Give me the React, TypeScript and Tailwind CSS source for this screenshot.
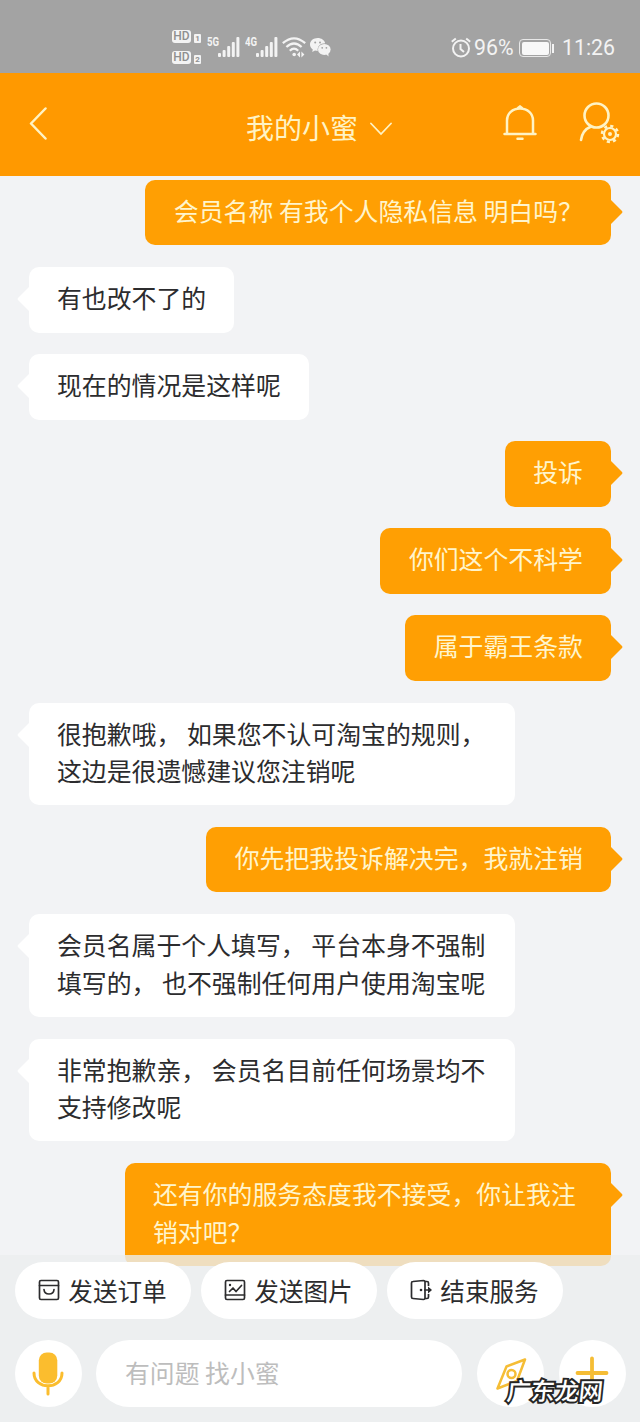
import type { ReactNode } from "react";

type Message = { from: "me" | "bot"; lines: string[] };

const messages: Message[] = [
  { from: "me", lines: ["会员名称 有我个人隐私信息 明白吗？"] },
  { from: "bot", lines: ["有也改不了的"] },
  { from: "bot", lines: ["现在的情况是这样呢"] },
  { from: "me", lines: ["投诉"] },
  { from: "me", lines: ["你们这个不科学"] },
  { from: "me", lines: ["属于霸王条款"] },
  { from: "bot", lines: ["很抱歉哦， 如果您不认可淘宝的规则，", "这边是很遗憾建议您注销呢"] },
  { from: "me", lines: ["你先把我投诉解决完，我就注销"] },
  { from: "bot", lines: ["会员名属于个人填写， 平台本身不强制", "填写的， 也不强制任何用户使用淘宝呢"] },
  { from: "bot", lines: ["非常抱歉亲， 会员名目前任何场景均不", "支持修改呢"] },
  { from: "me", lines: ["还有你的服务态度我不接受，你让我注", "销对吧？"] },
];

function Signal({ label }: { label: string }) {
  return (
    <div className="flex h-[22px] items-start">
      <span className="w-[11px] origin-left scale-x-80 font-['Roboto'] text-[12px] leading-[10px] font-bold">{label}</span>
      <svg width="22" height="20" viewBox="0 0 22 20" fill="currentColor">
        <rect x="0" y="16" width="3" height="4" rx="1" />
        <rect x="4.6" y="13" width="3" height="7" rx="1" />
        <rect x="9.2" y="9" width="3" height="11" rx="1" />
        <rect x="13.8" y="5" width="3" height="15" rx="1" />
        <rect x="18.4" y="0" width="3" height="20" rx="1" />
      </svg>
    </div>
  );
}

function HdBadge({ sim }: { sim: string }) {
  return (
    <div className="flex items-end gap-[3px]">
      <span className="h-[13px] w-[19px] rounded-[3px] bg-[#f3f3f3] text-center font-['Roboto'] text-[12px] leading-[13px] font-medium text-[#8f8f8f]">HD</span>
      <span className="h-[9px] w-[7px] rounded-[1px] bg-[#f3f3f3] text-center font-['Roboto'] text-[8px] leading-[9px] font-bold text-[#8f8f8f]">{sim}</span>
    </div>
  );
}

function StatusBar() {
  return (
    <div className="flex h-[73px] shrink-0 items-start bg-[#a3a3a3] pt-[30px] text-[#f3f3f3]">
      <div className="ml-[172px] flex w-[35px] flex-col gap-[8px]">
        <HdBadge sim="1" />
        <HdBadge sim="2" />
      </div>
      <div className="mt-[7px] flex">
        <Signal label="5G" />
        <div className="w-[5px]" />
        <Signal label="4G" />
      </div>
      <svg width="24" height="22" viewBox="0 0 24 22" className="mt-[7px] ml-[4px]" fill="none" stroke="currentColor" strokeWidth="2.200">
        <path d="M.8 6.200Q12-3.600 23.200 6.200M4.400 10Q12 3 19.600 10M7.800 13.800Q12 9.600 16.200 13.800" />
        <circle cx="12.200" cy="17.500" r="1.800" fill="currentColor" stroke="none" />
        <path d="M18 14.500v6l-3-3zM19.400 14.500v6l3-3z" fill="currentColor" stroke="none" />
      </svg>
      <svg width="21" height="19" viewBox="0 0 21 19" className="mt-[8px] ml-[4px]" fill="currentColor">
        <path d="M7.700 0C3.400 0 0 2.800 0 6.400c0 2 1.100 3.800 2.800 5L2.200 14l2.800-1.500c.9.3 1.800.4 2.700.4C7 8.500 10.200 5.200 15.100 5.200 14.500 2.200 11.400 0 7.700 0z" />
        <ellipse cx="14.300" cy="11.400" rx="6.300" ry="5.500" />
        <path d="m15.500 15.500 3 3-.2-3.500z" />
        <g fill="#a3a3a3">
          <circle cx="5.200" cy="4.400" r="1" />
          <circle cx="10" cy="4.400" r="1" />
          <circle cx="12.200" cy="9.800" r=".9" />
          <circle cx="16.400" cy="9.800" r=".9" />
        </g>
      </svg>
      <div className="mt-[6px] ml-[120px] flex h-6 items-center">
        <svg width="20" height="21" viewBox="0 0 20 21" className="-mt-[2px]" fill="none" stroke="currentColor" strokeWidth="2">
          <circle cx="10" cy="11.500" r="8" />
          <path d="M9.500 7v5l3.500 3M.8 4.800 4.800 1.400M15.200 1.400l4 3.400" />
        </svg>
        <span className="ml-[3px] w-[41px] font-['Roboto'] text-[21.300px] leading-6">96%</span>
        <div className="ml-[4px] h-[18px] w-[32px] rounded-[4px] border border-[#e8e8e8] p-[1.500px]">
          <div className="h-full rounded-[2px] bg-[#f8f8f8]" />
        </div>
        <div className="ml-px h-[9px] w-[2px] bg-[#f3f3f3]" />
        <span className="ml-[8px] font-['Roboto'] text-[21.300px] leading-6">11:26</span>
      </div>
    </div>
  );
}

function Header() {
  return (
    <div className="flex h-[103px] shrink-0 items-center bg-[#ff9900] text-[#fff3c4]">
      <svg width="20" height="34" viewBox="0 0 20 34" className="-mt-[4px] ml-[29px]" fill="none" stroke="currentColor" strokeWidth="2.500" strokeLinecap="round" strokeLinejoin="round">
        <path d="M16.500 2.500 2 17.500l14.500 15" />
      </svg>
      <h1 className="mt-[4px] ml-[197px] text-[28px] leading-[40px]">我的小蜜</h1>
      <svg width="22" height="14" viewBox="0 0 22 14" className="mt-[8px] ml-[12px]" fill="none" stroke="currentColor" strokeWidth="1.800" strokeLinecap="round">
        <path d="m1 1.500 10 10.500L21 1.500" />
      </svg>
      <svg width="34" height="36" viewBox="0 0 34 36" className="-mt-[4px] ml-[111px]" fill="none" stroke="currentColor" strokeWidth="2.500" strokeLinecap="round">
        <path d="M4 28.500V15.500C4 8.500 9.500 3.500 17 3.500s13 5 13 12v13M1.500 29h31M14.500 33.700h5M15 3l2-1.500L19 3" />
      </svg>
      <svg width="42" height="44" viewBox="0 0 42 44" className="-mt-[3px] ml-[42px]" fill="none" stroke="currentColor" strokeWidth="2.600" strokeLinecap="round">
        <circle cx="17.500" cy="14.500" r="12" />
        <path d="M2 39c1-7 4-11 10-13.500" />
        <circle cx="31" cy="33" r="6" strokeWidth="2.200" />
        <circle cx="31" cy="33" r="8" strokeWidth="2.500" strokeLinecap="butt" strokeDasharray="3.140 3.140" />
        <circle cx="31" cy="33" r="2" fill="currentColor" stroke="none" />
      </svg>
    </div>
  );
}

function Bubble({ message }: { message: Message }) {
  const mine = message.from === "me";
  const width = message.lines.length > 1 ? "w-[486.500px]" : "";
  return (
    <div className={mine ? "flex justify-end pr-[17px]" : "flex pl-[17px]"}>
      {!mine && (
        <svg width="12" height="24" viewBox="0 0 12 24" className="mt-[20px] shrink-0 text-white" fill="currentColor">
          <path d="M12 0v24L1 13q-1-1 0-2z" />
        </svg>
      )}
      <div
        className={
          mine
            ? `${width} rounded-[10px] bg-[#ff9f03] pt-[12px] pr-[28px] pb-[16px] pl-[28.500px] text-[#fff5cc]`
            : `${width} -ml-[0.500px] rounded-[10px] bg-white pt-[12px] pr-[28px] pb-[16px] pl-[28.500px] text-[#2c2c2e]`
        }
      >
        {message.lines.map((line) => (
          <p key={line} className="text-[24.880px] leading-[37.400px] whitespace-nowrap">{line}</p>
        ))}
      </div>
      {mine && (
        <svg width="12" height="24" viewBox="0 0 12 24" className="mt-[20px] shrink-0 text-[#ff9f03]" fill="currentColor">
          <path d="M0 0v24l11-11q1-1 0-2z" />
        </svg>
      )}
    </div>
  );
}

function Chip({ icon, label }: { icon: ReactNode; label: string }) {
  return (
    <button className="flex h-[57px] w-[176px] items-center justify-center gap-[8px] rounded-full bg-white pb-px text-[24.600px] whitespace-nowrap text-[#2c2c2e]">
      {icon}
      {label}
    </button>
  );
}

function RoundButton({ children }: { children: ReactNode }) {
  return (
    <button className="flex h-[67px] w-[67px] shrink-0 items-center justify-center rounded-full bg-white">{children}</button>
  );
}

function Footer() {
  return (
    <div className="absolute inset-x-0 bottom-0 h-[167px] bg-[#ebedef]/80 pt-[7px] pl-[14.500px]">
      <div className="flex gap-[10px]">
        <Chip
          label="发送订单"
          icon={
            <svg width="22" height="22" viewBox="0 0 22 22" fill="none" stroke="currentColor" strokeWidth="1.700" strokeLinecap="round">
              <rect x="1.500" y="1.500" width="19" height="19" rx="1.500" />
              <path d="M1.500 6.500h19M6 10.500c.5 6 9.500 6 10 0" />
            </svg>
          }
        />
        <Chip
          label="发送图片"
          icon={
            <svg width="22" height="22" viewBox="0 0 22 22" fill="none" stroke="currentColor" strokeWidth="1.700" strokeLinecap="round" strokeLinejoin="round">
              <rect x="1.500" y="1.500" width="19" height="19" rx="1.500" />
              <path d="M1.500 16h19M5.500 12.500 9 9l3 3.500 5.500-6" />
              <circle cx="6" cy="6" r="1.200" fill="currentColor" stroke="none" />
            </svg>
          }
        />
        <Chip
          label="结束服务"
          icon={
            <svg width="22" height="22" viewBox="0 0 22 22" fill="none" stroke="currentColor" strokeWidth="1.700" strokeLinejoin="round">
              <path d="M3 2.500 13.500 1.500q1.500 0 1.500 1.500v16q0 1.500-1.500 1.500L3 19.500q-1.500 0-1.500-1.500V4q0-1.500 1.500-1.500zM15 2.500h2q1.500 0 1.500 1.500v3M15 19.500h2q1.500 0 1.500-1.500v-3M14 11h6" />
              <path d="m18 7.500 4 3.500-4 3.500z" fill="currentColor" stroke="none" />
              <circle cx="11" cy="11" r="1.300" fill="currentColor" stroke="none" />
            </svg>
          }
        />
      </div>
      <div className="mt-[21px] flex">
        <RoundButton>
          <svg width="32" height="44" viewBox="0 0 32 44" fill="none" stroke="#fbbd2e" strokeWidth="3" strokeLinecap="round">
            <rect x="6.800" y=".5" width="18.500" height="31" rx="8" fill="#fbbd2e" stroke="none" />
            <path d="M2 21c0 17 28 17 28 0M16 34v8" />
          </svg>
        </RoundButton>
        <div className="ml-[14.500px] flex h-[67px] w-[366px] items-center rounded-full bg-white pb-[2px] pl-[29px] text-[24.850px] text-[#bdbdbd]">
          有问题 找小蜜
        </div>
        <div className="ml-[15px]">
          <RoundButton>
            <svg width="32" height="32" viewBox="0 0 32 32" className="ml-[2px]" fill="none" stroke="#f5bd35" strokeWidth="2.500" strokeLinejoin="round">
              <path d="M29 1.500 10.500 8.500 1.500 30.500 21 23z" />
              <circle cx="15.500" cy="16" r="4" />
            </svg>
          </RoundButton>
        </div>
        <div className="ml-[14.500px]">
          <RoundButton>
            <svg width="34" height="34" viewBox="0 0 34 34" className="-mt-[2px]" stroke="#f5bd35" strokeWidth="3.800" strokeLinecap="round">
              <path d="M2.500 17h29M17 2.500v29" />
            </svg>
          </RoundButton>
        </div>
      </div>
      {/* Site watermark */}
      <div className="absolute top-[118px] left-[507px] -skew-x-6 text-[24px] leading-[34px] font-medium text-white [paint-order:stroke_fill] [-webkit-text-stroke:4px_#262626]">
        广东龙网
      </div>
    </div>
  );
}

export default function App() {
  return (
    <div className="relative flex h-[1422px] w-[640px] flex-col overflow-hidden bg-[#f2f3f5] font-['Noto_Sans_CJK_SC',sans-serif]">
      <StatusBar />
      <Header />
      <div className="flex flex-col gap-[21.700px] pt-[4px]">
        {messages.map((message) => (
          <Bubble key={message.lines[0]} message={message} />
        ))}
      </div>
      <Footer />
    </div>
  );
}
